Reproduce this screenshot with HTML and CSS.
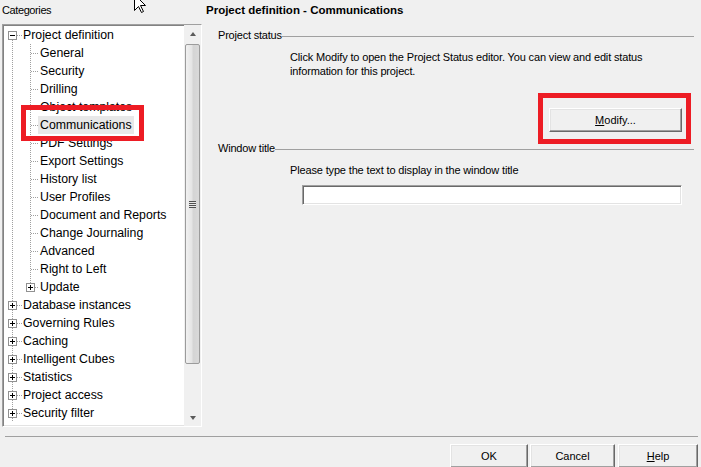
FILE: index.html
```html
<!DOCTYPE html>
<html>
<head>
<meta charset="utf-8">
<title>Project definition - Communications</title>
<link rel="stylesheet" href="styles.css">
</head>
<body>
<div class="dialog">
  <div class="main">
    <div class="left">
      <div class="cat-label">Categories</div>
      <div class="tree">
        <div class="items">
          <div class="row"><span class="g root first"><span class="box minus"></span></span><span class="label">Project definition</span></div>
          <div class="row"><span class="g pass"></span><span class="g child"></span><span class="label">General</span></div>
          <div class="row"><span class="g pass"></span><span class="g child"></span><span class="label">Security</span></div>
          <div class="row"><span class="g pass"></span><span class="g child"></span><span class="label">Drilling</span></div>
          <div class="row"><span class="g pass"></span><span class="g child"></span><span class="label">Object templates</span></div>
          <div class="row"><span class="g pass"></span><span class="g child"></span><span class="label selected">Communications</span></div>
          <div class="row"><span class="g pass"></span><span class="g child"></span><span class="label">PDF Settings</span></div>
          <div class="row"><span class="g pass"></span><span class="g child"></span><span class="label">Export Settings</span></div>
          <div class="row"><span class="g pass"></span><span class="g child"></span><span class="label">History list</span></div>
          <div class="row"><span class="g pass"></span><span class="g child"></span><span class="label">User Profiles</span></div>
          <div class="row"><span class="g pass"></span><span class="g child"></span><span class="label">Document and Reports</span></div>
          <div class="row"><span class="g pass"></span><span class="g child"></span><span class="label">Change Journaling</span></div>
          <div class="row"><span class="g pass"></span><span class="g child"></span><span class="label">Advanced</span></div>
          <div class="row"><span class="g pass"></span><span class="g child"></span><span class="label">Right to Left</span></div>
          <div class="row"><span class="g pass"></span><span class="g child last"><span class="box plus"></span></span><span class="label">Update</span></div>
          <div class="row"><span class="g root"><span class="box plus"></span></span><span class="label">Database instances</span></div>
          <div class="row"><span class="g root"><span class="box plus"></span></span><span class="label">Governing Rules</span></div>
          <div class="row"><span class="g root"><span class="box plus"></span></span><span class="label">Caching</span></div>
          <div class="row"><span class="g root"><span class="box plus"></span></span><span class="label">Intelligent Cubes</span></div>
          <div class="row"><span class="g root"><span class="box plus"></span></span><span class="label">Statistics</span></div>
          <div class="row"><span class="g root"><span class="box plus"></span></span><span class="label">Project access</span></div>
          <div class="row"><span class="g root"><span class="box plus"></span></span><span class="label">Security filter</span></div>
        </div>
        <div class="scrollbar">
          <div class="sb-btn"><span class="tri up"></span></div>
          <div class="sb-track">
            <div class="thumb"><span class="grip"></span></div>
          </div>
          <div class="sb-btn"><span class="tri down"></span></div>
        </div>
      </div>
    </div>
    <div class="right">
      <div class="title">Project definition - Communications</div>
      <div class="group-head"><span class="group-label">Project status</span><span class="group-line"></span></div>
      <div class="desc">Click Modify to open the Project Status editor. You can view and edit status<br>information for this project.</div>
      <div class="modify-row"><button class="btn modify"><u>M</u>odify...</button></div>
      <div class="group-head second"><span class="group-label">Window title</span><span class="group-line"></span></div>
      <div class="prompt">Please type the text to display in the window title</div>
      <div class="input-row"><input class="text-input" type="text"></div>
    </div>
  </div>
  <div class="sep"></div>
  <div class="buttons">
    <button class="btn ok">OK</button>
    <button class="btn cancel">Cancel</button>
    <button class="btn help"><u>H</u>elp</button>
  </div>
</div>
<div class="annot annot-tree"></div>
<div class="annot annot-modify"></div>
<svg class="cursor" width="14" height="21" viewBox="0 0 14 21"><polygon points="0.5,0.5 0.5,16.5 4.5,12.5 7.5,18.5 9.5,17.5 6.5,11.5 11.5,11.5" fill="#fff" stroke="#000" stroke-width="1"/></svg>
</body>
</html>
```
FILE: styles.css
```css
html, body {
  margin: 0;
  padding: 0;
}
body {
  width: 701px;
  height: 467px;
  overflow: hidden;
  position: relative;
  background: #f0f0f0;
  font-family: "Liberation Sans", Arial, sans-serif;
  font-size: 11px;
  color: #000;
}
.dialog {
  display: flex;
  flex-direction: column;
  height: 467px;
}
.main {
  display: flex;
  height: 436px;
  flex: none;
}
.left {
  width: 202px;
  flex: none;
  display: flex;
  flex-direction: column;
}
.cat-label {
  height: 24px;
  line-height: 20px;
  padding-left: 2px;
  letter-spacing: -0.4px;
}
.tree {
  margin-left: 2px;
  width: 200px;
  height: 403px;
  box-sizing: border-box;
  border: 1px solid;
  border-color: #a0a0a0 #ffffff #ffffff #a0a0a0;
  box-shadow: inset 1px 1px #828282, inset -1px -1px #e3e3e3;
  background: #fff;
  display: flex;
}
.items {
  flex: 1;
  padding-top: 1px;
  overflow: hidden;
}
.row {
  display: flex;
  height: 18px;
  align-items: stretch;
}
.g {
  position: relative;
  flex: none;
  width: 18px;
  height: 18px;
}
.g.child { width: 17px; }
.g.root::before,
.g.pass::before,
.g.child::before {
  content: "";
  position: absolute;
  left: 9px;
  top: 0;
  bottom: 0;
  width: 1px;
  background: repeating-linear-gradient(to bottom, #a0a0a0 0 1px, transparent 1px 2px);
}
.g.root.first::before { top: 10px; }
.g.child.last::before { bottom: 9px; }
.g.root::after,
.g.child::after {
  content: "";
  position: absolute;
  left: 10px;
  right: 0;
  top: 9px;
  height: 1px;
  background: repeating-linear-gradient(to right, #a0a0a0 0 1px, transparent 1px 2px);
}
.g.root::after { right: -2px; }
.box {
  position: absolute;
  left: 5px;
  top: 5px;
  width: 9px;
  height: 9px;
  box-sizing: border-box;
  border: 1px solid #919191;
  background: #fff;
  z-index: 1;
}
.g.child .box { left: 5px; }
.box::before {
  content: "";
  position: absolute;
  left: 1px;
  top: 3px;
  width: 5px;
  height: 1px;
  background: #000;
}
.box.plus::after {
  content: "";
  position: absolute;
  left: 3px;
  top: 1px;
  width: 1px;
  height: 5px;
  background: #000;
}
.label {
  font-size: 12.3px;
  line-height: 18px;
  padding: 0 2px;
  white-space: nowrap;
}
.label.selected {
  background: #e8e8e8;
}
.scrollbar {
  width: 17px;
  flex: none;
  display: flex;
  flex-direction: column;
  background: #f0f0f0;
}
.sb-btn {
  height: 17px;
  flex: none;
  display: flex;
  align-items: center;
  justify-content: center;
}
.tri {
  width: 0;
  height: 0;
  border-left: 3.5px solid transparent;
  border-right: 3.5px solid transparent;
}
.tri.up { border-bottom: 4px solid #5a5a5a; }
.tri.down { border-top: 4px solid #5a5a5a; }
.sb-track {
  flex: 1;
  padding: 2px 1px 0;
}
.thumb {
  height: 320px;
  box-sizing: border-box;
  border: 1px solid #9b9b9b;
  border-radius: 2px;
  background: linear-gradient(to right, #f1f1f1 0%, #e4e4e4 45%, #d4d4d4 55%, #d9d9d9 100%);
  display: flex;
  align-items: center;
  justify-content: center;
}
.grip {
  width: 7px;
  height: 7px;
  background: repeating-linear-gradient(to bottom, #505050 0 1px, #e8e8e8 1px 2px);
}
.right {
  flex: 1;
  display: flex;
  flex-direction: column;
}
.title {
  height: 24px;
  line-height: 20px;
  padding-left: 4px;
  font-weight: bold;
  font-size: 11.5px;
}
.group-head {
  height: 22px;
  margin-left: 16px;
  margin-right: 7px;
  display: flex;
  align-items: center;
}
.group-label {
  letter-spacing: -0.2px;
  line-height: 22px;
}
.group-line {
  flex: 1;
  height: 1px;
  margin-top: 2px;
  background: #a0a0a0;
}
.desc {
  margin-top: 4px;
  margin-left: 88px;
  line-height: 14px;
  letter-spacing: -0.15px;
}
.modify-row {
  margin-top: 30px;
  display: flex;
  justify-content: flex-end;
  padding-right: 19px;
}
.btn {
  font-family: "Liberation Sans", Arial, sans-serif;
  font-size: 11px;
  color: #000;
  background: #f0f0f0;
  box-sizing: border-box;
  border: 1px solid;
  border-color: #ffffff #696969 #696969 #ffffff;
  box-shadow: inset -1px -1px #a0a0a0, inset 1px 1px #e3e3e3;
  padding: 0;
  margin: 0;
  border-radius: 0;
}
.btn u { text-decoration: underline; }
.modify {
  width: 133px;
  height: 24px;
}
.group-head.second { margin-top: 5px; }
.prompt {
  margin-top: 4px;
  margin-left: 88px;
  line-height: 14px;
  letter-spacing: -0.15px;
}
.input-row {
  margin-top: 8px;
  margin-left: 100px;
}
.text-input {
  display: block;
  width: 380px;
  height: 20px;
  box-sizing: border-box;
  margin: 0;
  padding: 0;
  border: 1px solid;
  border-color: #a0a0a0 #ffffff #ffffff #a0a0a0;
  box-shadow: inset 1px 1px #696969, inset -1px -1px #e3e3e3;
  background: #fff;
  outline: none;
}
.sep {
  height: 1px;
  margin: 0 3px 0 5px;
  background: #a0a0a0;
  flex: none;
}
.buttons {
  margin-top: 7px;
  display: flex;
  justify-content: flex-end;
  padding-right: 3px;
}
.buttons .btn { height: 24px; }
.ok { width: 78px; margin-right: 2px; }
.cancel { width: 85px; margin-right: 3px; }
.help { width: 80px; }
.annot {
  position: absolute;
  box-sizing: border-box;
  border: 5px solid #ed1c24;
}
.annot-tree {
  left: 21px;
  top: 105px;
  width: 123px;
  height: 36px;
}
.annot-modify {
  left: 538px;
  top: 93px;
  width: 153px;
  height: 51px;
}
.cursor {
  position: absolute;
  left: 134px;
  top: -6px;
}
```
